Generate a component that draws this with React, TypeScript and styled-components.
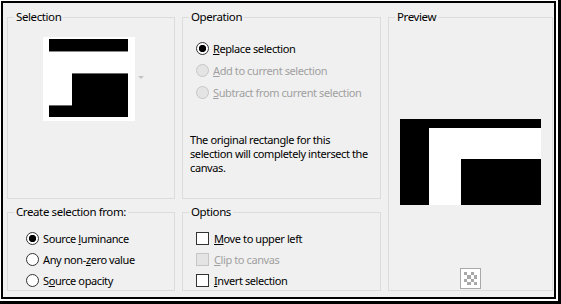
import styled, { createGlobalStyle } from "styled-components";

const GlobalStyle = createGlobalStyle`
    html, body {
        margin: 0;
        padding: 0;
        background: #fff;
    }
    body {
        font-family: "Segoe UI", "Noto Sans", sans-serif;
        font-size: 11px;
        letter-spacing: -0.4px;
        color: #000;
    }
`

function App() {
    return (
        <Frame>
            <GlobalStyle />
            <Dialog>
                <Group>
                    <Legend>Selection</Legend>
                    <SelectionBody>
                        <svg width="92" height="84" shapeRendering="crispEdges">
                            <rect width="92" height="84" fill="#fff" />
                            <rect x="6" y="2" width="79" height="12" fill="#000" />
                            <rect x="6" y="14" width="79" height="1" fill="#8a8a8a" />
                            <rect x="29" y="36" width="56" height="44" fill="#000" />
                            <rect x="29" y="36" width="56" height="1" fill="#6a6a6a" />
                            <rect x="6" y="68" width="23" height="12" fill="#000" />
                            <rect x="6" y="68" width="23" height="1" fill="#6a6a6a" />
                        </svg>
                        <DropArrow />
                    </SelectionBody>
                </Group>

                <Group>
                    <Legend>Operation</Legend>
                    <OptionList $top={13} $left={13} $row={22}>
                        <Option>
                            <Radio $checked />
                            <span><u>R</u>eplace selection</span>
                        </Option>
                        <Option $disabled>
                            <Radio $disabled />
                            <span><u>A</u>dd to current selection</span>
                        </Option>
                        <Option $disabled>
                            <Radio $disabled />
                            <span><u>S</u>ubtract from current selection</span>
                        </Option>
                    </OptionList>
                    <Note>
                        <span>The original rectangle for this</span>
                        <span>selection will completely intersect the</span>
                        <span>canvas.</span>
                    </Note>
                </Group>

                <PreviewGroup>
                    <Legend>Preview</Legend>
                    <PreviewBody>
                        <svg width="141" height="86" shapeRendering="crispEdges">
                            <rect width="141" height="86" fill="#000" />
                            <rect x="29" y="9" width="112" height="31" fill="#fff" />
                            <rect x="29" y="40" width="32" height="46" fill="#fff" />
                        </svg>
                        <CheckerButton>
                            <svg width="19" height="19" shapeRendering="crispEdges">
                                <rect width="19" height="19" fill="#fff" />
                                {[0, 1, 2, 3].flatMap(r =>
                                    [0, 1, 2, 3].map(c =>
                                        (r + c) % 2 === 0 ? (
                                            <rect key={`${r}-${c}`} x={3 + c * 3.25} y={3 + r * 3.25} width="3.25" height="3.25" fill="#a8a8a8" />
                                        ) : null
                                    )
                                )}
                            </svg>
                        </CheckerButton>
                    </PreviewBody>
                </PreviewGroup>

                <Group>
                    <Legend>Create selection from:</Legend>
                    <OptionList $top={9} $left={18} $row={21}>
                        <Option>
                            <Radio $checked />
                            <span>Source <u>l</u>uminance</span>
                        </Option>
                        <Option>
                            <Radio />
                            <span>Any non-<u>z</u>ero value</span>
                        </Option>
                        <Option>
                            <Radio />
                            <span>S<u>o</u>urce opacity</span>
                        </Option>
                    </OptionList>
                </Group>

                <Group>
                    <Legend>Options</Legend>
                    <OptionList $top={9} $left={13} $row={21}>
                        <Option>
                            <Check />
                            <span><u>M</u>ove to upper left</span>
                        </Option>
                        <Option $disabled>
                            <Check $disabled />
                            <span><u>C</u>lip to canvas</span>
                        </Option>
                        <Option>
                            <Check />
                            <span><u>I</u>nvert selection</span>
                        </Option>
                    </OptionList>
                </Group>
            </Dialog>
        </Frame>
    )
}

export default App


const Frame = styled.div`
    width: 561px;
    height: 304px;
    box-sizing: border-box;
    background: #fff;
    border-right: 3px solid #000;
    border-bottom: 3px solid #000;
    padding: 1px 2px 2px 1px;
    display: flex;
`

const Dialog = styled.div`
    flex: 1;
    box-sizing: border-box;
    border: 2px solid #000;
    background: #f0f0f0;
    display: grid;
    grid-template-columns: 168px 199px 1fr;
    grid-template-rows: 189px 86px;
    column-gap: 7px;
    row-gap: 6px;
    padding: 7px 1px 6px 4px;
`

const Group = styled.fieldset`
    margin: 0;
    padding: 0;
    min-width: 0;
    border: 1px solid #dcdcdc;
    display: flex;
    flex-direction: column;
`

const PreviewGroup = styled(Group)`
    grid-column: 3;
    grid-row: 1 / span 2;
`

const Legend = styled.legend`
    margin-left: 6px;
    padding: 0 2px;
    font-size: 11.5px;
    line-height: 14px;
`

const SelectionBody = styled.div`
    display: flex;
    align-items: center;
    gap: 3px;
    padding: 13px 0 0 35px;

    svg {
        display: block;
    }
`

const DropArrow = styled.span`
    width: 0;
    height: 0;
    margin-top: -4px;
    border-left: 3px solid transparent;
    border-right: 3px solid transparent;
    border-top: 3px solid #c4c4c4;
`

const OptionList = styled.div<{ $top: number; $left: number; $row: number }>`
    display: flex;
    flex-direction: column;
    padding: ${p => p.$top}px 0 0 ${p => p.$left}px;

    & > * {
        height: ${p => p.$row}px;
    }
`

const Option = styled.label<{ $disabled?: boolean }>`
    display: flex;
    align-items: center;
    gap: 4px;
    white-space: nowrap;
    color: ${p => (p.$disabled ? "#a0a0a0" : "#000")};

    u {
        text-underline-offset: 1px;
    }
`

const Radio = styled.span<{ $checked?: boolean; $disabled?: boolean }>`
    flex: none;
    width: 11px;
    height: 11px;
    border-radius: 50%;
    border: 1px solid ${p => (p.$disabled ? "#c6c6c6" : "#333")};
    background: ${p =>
        p.$checked
            ? "radial-gradient(circle, #000 0 3.4px, #fff 3.9px)"
            : p.$disabled
            ? "#e4e4e4"
            : "#fff"};
`

const Check = styled.span<{ $disabled?: boolean }>`
    flex: none;
    width: 11px;
    height: 11px;
    margin-right: 1px;
    border: 1px solid ${p => (p.$disabled ? "#c6c6c6" : "#333")};
    background: ${p => (p.$disabled ? "#e4e4e4" : "#fff")};
`

const Note = styled.div`
    display: flex;
    flex-direction: column;
    margin: 30px 0 0 7px;
    line-height: 14px;
`

const PreviewBody = styled.div`
    display: flex;
    flex-direction: column;
    align-items: center;
    padding-top: 95px;

    svg {
        display: block;
    }
`

const CheckerButton = styled.div`
    margin-top: 63px;
    border: 1px solid #a8a8a8;
`
